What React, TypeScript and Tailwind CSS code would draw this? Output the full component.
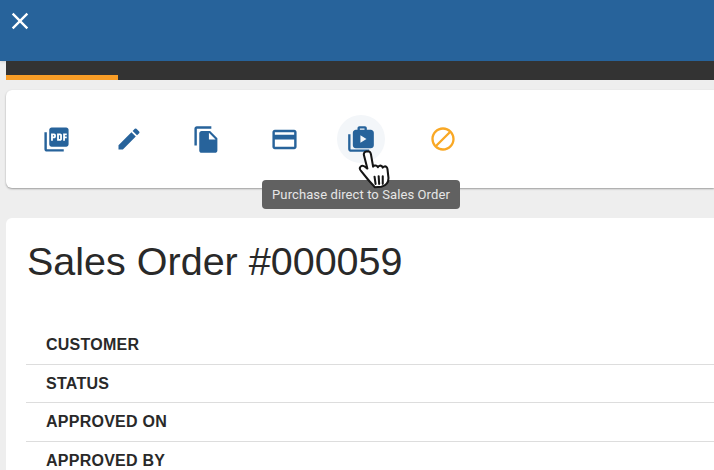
import { MdClose, MdPictureAsPdf, MdEdit, MdFileCopy, MdCreditCard, MdBlock } from 'react-icons/md'

const ROWS = ['CUSTOMER', 'STATUS', 'APPROVED ON', 'APPROVED BY']

function PurchaseIcon() {
  return (
    <svg viewBox="0 0 24 24" className="w-[28px] h-[28px]" fill="#27639b">
      <path d="M3 8H1v12.500C1 21.900 2.100 23 3.500 23H19v-2H3.500a.5.5 0 0 1-.5-.5V8z" />
      <path fillRule="evenodd" d="M9 4V2.600C9 1.700 9.700 1 10.600 1h4.800c.9 0 1.600.7 1.600 1.600V4h3.400c1.400 0 2.600 1.200 2.600 2.600v10.800c0 1.400-1.200 2.600-2.600 2.600H7.600C6.200 20 5 18.800 5 17.400V6.600C5 5.200 6.200 4 7.600 4H9zm2 0h4V3h-4v1zm.5 4.700v6.600l5.200-3.300-5.200-3.300z" />
    </svg>
  )
}

function HandCursor() {
  return (
    <svg viewBox="0 0 36 38" className="w-[38px] h-[39px]">
      <path
        d="M11.500 1.500c-1.800.3-2.800 1.800-2.300 3.600l3.300 13-2-1.500c-1.600-1.400-3.500-1.500-4.600-.4-1.100 1.100-.8 2.800.4 4.200l7 8.600c1.800 2.200 3.800 4 6.500 7.300l6.300-.5c4.500-1 7-4 7-8.500l-1-8.700c-.2-1.800-1.400-2.800-2.800-2.600-.8.1-1.400.5-1.800 1.100-.5-1.400-1.600-2.100-2.900-1.800-.9.200-1.500.7-1.900 1.400-.6-1.200-1.700-1.800-3-1.500-.7.200-1.200.5-1.600 1l-2-11.500c-.4-2-1-3.500-2.600-3.200z"
        fill="#fff"
        stroke="#151515"
        strokeWidth="2"
        strokeLinejoin="round"
      />
      <path d="M19.500 26l1 7M23.500 25.500l.5 7.500M27.500 25.500v7.500" stroke="#151515" strokeWidth="2" strokeLinecap="round" />
    </svg>
  )
}

export default function App() {
  return (
    <div className="relative w-[714px] h-[470px] overflow-hidden bg-[#eeeeee] font-['Liberation_Sans',sans-serif]">
      <div className="h-[61px] bg-[#27639b] pl-[6px] pt-[7px] text-white shadow-sm">
        <MdClose size={28} />
      </div>

      <div className="ml-[6px] h-[19px] flex flex-col justify-end bg-[#333333]">
        <div className="w-[112px] h-[5px] bg-[#f99d26]" />
      </div>

      <div className="relative ml-[6px] mt-[10px] h-[98px] bg-white rounded-l-[6px] shadow-[0_1px_2px_rgba(0,0,0,0.35)] flex items-center pl-[26px] text-[#27639b]">
        <span className="w-[48px] h-[48px] flex items-center justify-center"><MdPictureAsPdf size={29} /></span>
        <span className="ml-[25px] w-[48px] h-[48px] flex items-center justify-center"><MdEdit size={28} /></span>
        <span className="ml-[29px] w-[48px] h-[48px] flex items-center justify-center"><MdFileCopy size={29} /></span>
        <span className="ml-[30px] w-[48px] h-[48px] flex items-center justify-center"><MdCreditCard size={29} /></span>
        <span className="ml-[29px] w-[48px] h-[48px] flex items-center justify-center rounded-full bg-[#f3f6f9]"><PurchaseIcon /></span>
        <span className="ml-[34px] w-[48px] h-[48px] flex items-center justify-center text-[#f9a825]"><MdBlock size={28} /></span>
        <div className="absolute left-[256px] top-[90px] z-10 w-[198px] h-[29px] rounded-[4px] bg-[#616161] text-[#e6e6e6] text-[13px] tracking-[0.1px] font-['Roboto',sans-serif] flex items-center justify-center">
          Purchase direct to Sales Order
        </div>
        <div className="absolute left-[348px] top-[60px] z-20">
          <HandCursor />
        </div>
      </div>

      <div className="ml-[6px] mt-[30px] h-[260px] bg-white rounded-tl-[6px] pl-[20px] text-[#292929]">
        <h1 className="pt-[19px] pl-[1px] text-[39.5px] leading-[48px]">Sales Order #000059</h1>
        <div className="mt-[41px]">
          {ROWS.map((row) => (
            <div key={row} className="h-[38.700px] pl-[20px] flex items-center border-b border-[#dddddd] text-[16px] font-bold tracking-[0.25px]">
              {row}
            </div>
          ))}
        </div>
      </div>
    </div>
  )
}
